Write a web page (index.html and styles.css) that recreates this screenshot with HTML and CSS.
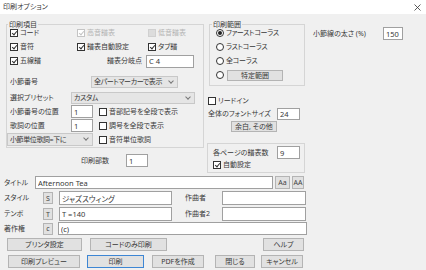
FILE: index.html
```html
<!DOCTYPE html>
<html lang="ja">

<head>
  <meta charset="UTF-8">
  <title>印刷オプション</title>
  <link rel="stylesheet" href="styles.css">
</head>

<body>
  <div class="win">
    <div class="titlebar">
      <span>印刷オプション</span>
      <svg class="close" width="7" height="7" viewBox="0 0 7 7"><path d="M0.5 0.5 6.5 6.5M6.5 0.5 0.5 6.5" stroke="#333" stroke-width="0.8"/></svg>
    </div>

    <div class="top">
      <!-- 左: 印刷項目 -->
      <div class="col-left">
        <fieldset class="group g-items">
          <legend>印刷項目</legend>
          <div class="chk-grid">
            <label class="chk"><span class="cb on"></span>コード</label>
            <label class="chk dis"><span class="cb on"></span>高音譜表</label>
            <label class="chk dis"><span class="cb off"></span>低音譜表</label>
            <label class="chk"><span class="cb on"></span>音符</label>
            <label class="chk"><span class="cb on"></span>譜表自動設定</label>
            <label class="chk"><span class="cb on"></span>タブ譜</label>
          </div>
          <div class="row r14">
            <label class="chk w67"><span class="cb on"></span>五線譜</label>
            <span class="lbl-r">譜表分岐点</span>
            <input class="tb w48 h13" value="C 4">
          </div>
          <div class="row r12 mt8">
            <span class="lbl w81">小節番号</span>
            <span class="combo w87">全パートマーカーで表示<i class="chev"></i></span>
          </div>
          <div class="row r12 mt4">
            <span class="lbl w61">選択プリセット</span>
            <span class="combo w124">カスタム<i class="chev"></i></span>
          </div>
          <div class="row r13 mt1">
            <span class="lbl w61">小節番号の位置</span>
            <input class="tb w22 h13" value="1">
            <label class="chk ml6"><span class="cb"></span>音部記号を全段で表示</label>
          </div>
          <div class="row r13 mt1">
            <span class="lbl w61">歌詞の位置</span>
            <input class="tb w22 h13" value="1">
            <label class="chk ml6"><span class="cb"></span>調号を全段で表示</label>
          </div>
          <div class="row r13 mt1">
            <span class="combo w86 h13 pull">小節単位歌詞=下に<i class="chev"></i></span>
            <label class="chk ml6"><span class="cb"></span>音符単位歌詞</label>
          </div>
        </fieldset>
        <div class="row r13 copies">
          <span class="lbl w45">印刷部数</span>
          <input class="tb w22 h13" value="1">
        </div>
      </div>

      <!-- 中: 印刷範囲 -->
      <div class="col-mid">
        <fieldset class="group g-range">
          <legend>印刷範囲</legend>
          <div class="radios">
            <label class="chk"><span class="rb on"></span>ファーストコーラス</label>
            <label class="chk"><span class="rb"></span>ラストコーラス</label>
            <label class="chk"><span class="rb"></span>全コーラス</label>
            <div class="chk"><span class="rb"></span><button class="btn w56 h11 ml1">特定範囲</button></div>
          </div>
        </fieldset>
        <div class="row r12 mt9 ml1">
          <label class="chk"><span class="cb"></span>リードイン</label>
        </div>
        <div class="row r12 mt1 ml1">
          <span class="lbl w69">全体のフォントサイズ</span>
          <input class="tb w23 h12" value="24">
        </div>
        <div class="row r11 mt1">
          <button class="btn w46 h11 ml24">余白, その他</button>
        </div>
        <div class="group g-pages">
          <div class="row r13">
            <span class="lbl w64">各ページの譜表数</span>
            <input class="tb w23 h13" value="9">
          </div>
          <div class="row r12">
            <label class="chk"><span class="cb on"></span>自動設定</label>
          </div>
        </div>
      </div>

      <!-- 右 -->
      <div class="col-right">
        <div class="row r13">
          <span class="lbl w70">小節線の太さ (%)</span>
          <input class="tb w20 h13" value="150">
        </div>
      </div>
    </div>

    <!-- 曲情報 -->
    <div class="fields">
      <div class="row r13">
        <span class="lbl w31">タイトル</span>
        <input class="tb w238 h13" value="Afternoon Tea">
        <button class="btn sq w15 h13 ml2">Aa</button>
        <button class="btn sq w12 h13 ml2">AA</button>
      </div>
      <div class="row r14 mt2">
        <span class="lbl w39">スタイル</span>
        <button class="btn sq w10 h12">S</button>
        <input class="tb w113 h14 ml6" value="ジャズスウィング">
        <span class="lbl w50 pl13">作曲者</span>
        <input class="tb w84 h14" value="">
      </div>
      <div class="row r14 mt2">
        <span class="lbl w39">テンポ</span>
        <button class="btn sq w10 h12">T</button>
        <input class="tb w113 h14 ml6" value="T =140">
        <span class="lbl w50 pl13">作曲者2</span>
        <input class="tb w84 h14" value="">
      </div>
      <div class="row r13 mt1">
        <span class="lbl w39">著作権</span>
        <button class="btn sq w10 h12">c</button>
        <input class="tb w249 h13 ml5" value="(c)">
      </div>
    </div>

    <!-- ボタン -->
    <div class="btn-row mt3">
      <button class="btn w75 h13">プリンタ設定</button>
      <button class="btn w77 h13 ml8">コードのみ印刷</button>
      <button class="btn w41 h13 ml96">ヘルプ</button>
    </div>
    <div class="btn-row mt4">
      <button class="btn w72 h13 ml1">印刷プレビュー</button>
      <button class="btn default w57 h13 ml7">印刷</button>
      <button class="btn w52 h13 ml8">PDFを作成</button>
      <button class="btn w40 h13 ml11">閉じる</button>
      <button class="btn w42 h13 ml6">キャンセル</button>
    </div>
  </div>
</body>

</html>
```

FILE: styles.css
```css
* {
  box-sizing: border-box;
}

body {
  margin: 0;
  font-family: 'Noto Sans', 'Noto Sans CJK JP', sans-serif;
  font-size: 7px;
  line-height: 10px;
  color: #383838;
  font-feature-settings: "palt";
}

.win {
  width: 426px;
  height: 270px;
  background-color: #f0f0f0;
  overflow: hidden;
}

.titlebar {
  height: 14px;
  background-color: #fff;
  display: flex;
  align-items: center;
  justify-content: space-between;
  padding: 0 5px 0 3px;
}

.top {
  height: 162px;
  padding-top: 6px;
  display: flex;
  align-items: flex-start;
}

/* group boxes */
.group {
  margin: 0;
  border: 1px solid #d5d5d5;
  min-width: 0;
}

.group legend {
  padding: 0 1px;
  line-height: 9px;
}

.col-left {
  margin-left: 6px;
  width: 198px;
}

.g-items {
  width: 198px;
  padding: 0 0 1px 3px;
}

.g-items legend {
  margin-left: -2px;
}

.chk-grid {
  display: grid;
  grid-template-columns: 67px 71px 1fr;
  grid-auto-rows: 14px;
  margin-top: -3px;
}

.row {
  display: flex;
  align-items: center;
}

.btn-row {
  display: flex;
  padding-left: 7px;
}

.r11 { height: 11px; }
.r12 { height: 12px; }
.r13 { height: 13px; }
.r14 { height: 14px; }

.chk {
  display: flex;
  align-items: center;
  gap: 2px;
  white-space: nowrap;
}

.chk.dis {
  color: #b4b4b4;
}

/* checkbox */
.cb {
  width: 8px;
  height: 8px;
  border: 1px solid #333;
  background-color: #fff;
  display: inline-flex;
  align-items: center;
  justify-content: center;
  flex: none;
}

.cb.on::after {
  content: "";
  width: 2px;
  height: 4px;
  margin-top: -1px;
  border-right: 1px solid #333;
  border-bottom: 1px solid #333;
  transform: rotate(40deg);
}

.dis .cb {
  border-color: #c4c4c4;
}

.dis .cb.on::after {
  border-color: #c4c4c4;
}

.dis .cb.off {
  background-color: #dcdcdc;
  border-color: #d0d0d0;
}

/* radio */
.rb {
  width: 8px;
  height: 8px;
  border: 1px solid #333;
  border-radius: 50%;
  background-color: #fff;
  display: inline-flex;
  align-items: center;
  justify-content: center;
  flex: none;
}

.rb.on::after {
  content: "";
  width: 4px;
  height: 4px;
  border-radius: 50%;
  background-color: #222;
}

.lbl {
  white-space: nowrap;
  flex: none;
}

.lbl-r {
  width: 69px;
  text-align: right;
  padding-right: 4px;
  white-space: nowrap;
}

/* text box */
.tb {
  font: inherit;
  font-size: 7.5px;
  color: #383838;
  margin: 0;
  padding: 0 2px;
  border: 1px solid #a0a0a0;
  background-color: #fff;
  outline: none;
  flex: none;
}

/* combo box */
.combo {
  height: 12px;
  display: flex;
  align-items: center;
  justify-content: space-between;
  padding: 0 4px 0 2px;
  background-color: #e5e5e5;
  border: 1px solid #c8c8c8;
  white-space: nowrap;
  letter-spacing: -0.4px;
  flex: none;
}

.combo.pull {
  margin-left: -3px;
}

.chev {
  width: 4px;
  height: 4px;
  margin-top: -3px;
  border-right: 1px solid #777;
  border-bottom: 1px solid #777;
  transform: rotate(45deg);
}

/* buttons */
.btn {
  font: inherit;
  color: #383838;
  margin: 0;
  padding: 0;
  background-color: #e1e1e1;
  border: 1px solid #b4b4b4;
  line-height: 9px;
  white-space: nowrap;
  flex: none;
}

.btn.sq {
  color: #444;
}

.btn.default {
  border-color: #3d86d4;
}

.copies {
  margin-top: 6px;
  padding-left: 75px;
}

.col-mid {
  margin-left: 3px;
  width: 99px;
}

.g-range {
  margin-left: 2px;
  width: 96px;
  padding: 0 0 3px 6px;
}

.g-range legend {
  margin-left: -4px;
}

.radios {
  display: grid;
  grid-auto-rows: 14px;
  margin-top: -3px;
}

.radios .chk {
  letter-spacing: -0.3px;
}

.g-pages {
  margin-top: 11px;
  width: 98px;
  padding: 2px 0 0 5px;
  height: 30px;
}

.col-right {
  margin-left: 7px;
  margin-top: 7px;
}

.fields {
  padding-left: 4px;
}

/* sizes */
.w10 { width: 10px; }
.w12 { width: 12px; }
.w15 { width: 15px; }
.w20 { width: 20px; }
.w22 { width: 22px; }
.w23 { width: 23px; }
.w31 { width: 31px; }
.w39 { width: 39px; }
.w40 { width: 40px; }
.w41 { width: 41px; }
.w42 { width: 42px; }
.w45 { width: 45px; }
.w46 { width: 46px; }
.w48 { width: 48px; }
.w50 { width: 50px; }
.w52 { width: 52px; }
.w56 { width: 56px; }
.w57 { width: 57px; }
.w61 { width: 61px; }
.w64 { width: 64px; }
.w67 { width: 67px; }
.w69 { width: 69px; }
.w70 { width: 70px; }
.w72 { width: 72px; }
.w75 { width: 75px; }
.w77 { width: 77px; }
.w81 { width: 81px; }
.w84 { width: 84px; }
.w86 { width: 86px; }
.w87 { width: 87px; }
.w113 { width: 113px; }
.w124 { width: 124px; }
.w238 { width: 238px; }
.w249 { width: 249px; }

.h11 { height: 11px; }
.h12 { height: 12px; }
.h13 { height: 13px; }
.h14 { height: 14px; }

.mt1 { margin-top: 1px; }
.mt2 { margin-top: 2px; }
.mt3 { margin-top: 3px; }
.mt4 { margin-top: 4px; }
.mt8 { margin-top: 8px; }
.mt9 { margin-top: 9px; }

.ml1 { margin-left: 1px; }
.ml2 { margin-left: 2px; }
.ml5 { margin-left: 5px; }
.ml6 { margin-left: 6px; }
.ml7 { margin-left: 7px; }
.ml8 { margin-left: 8px; }
.ml11 { margin-left: 11px; }
.ml24 { margin-left: 24px; }
.ml96 { margin-left: 96px; }

.pl13 { padding-left: 13px; }
```
